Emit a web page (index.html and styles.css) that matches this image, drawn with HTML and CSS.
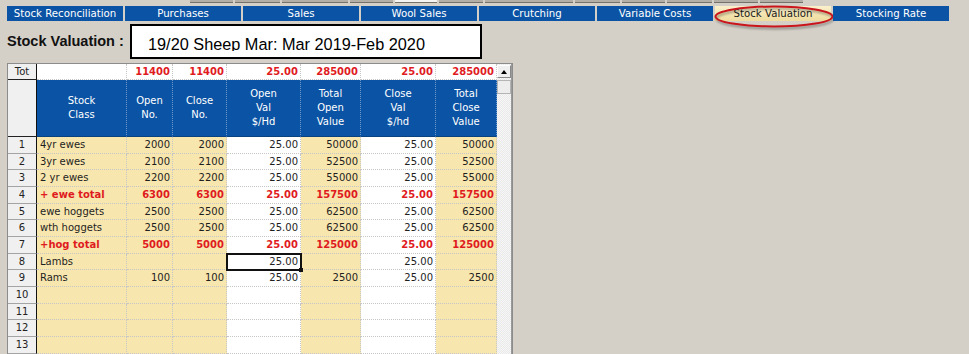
FILE: index.html
```html
<!DOCTYPE html>
<html lang="en">
<head>
  <meta charset="UTF-8">
  <meta name="viewport" content="width=device-width, initial-scale=1.0">
  <title>Stock Valuation</title>
  <link rel="stylesheet" href="styles.css">
</head>
<body>

  <!-- strip of buttons above the tabs -->
  <div class="strip">
    <span style="width:43px"></span><span style="width:45px"></span><span style="width:66px"></span>
    <span style="width:43px"></span><span class="lit" style="width:42px"></span><span style="width:44px"></span>
    <span style="width:88px"></span><span style="width:45px"></span><span style="width:43px"></span>
    <span style="width:45px"></span><span style="width:44px"></span><span style="width:43px"></span>
  </div>

  <!-- sheet tabs -->
  <div class="tabs">
    <div class="tab">Stock Reconciliation</div>
    <div class="tab">Purchases</div>
    <div class="tab">Sales</div>
    <div class="tab">Wool Sales</div>
    <div class="tab">Crutching</div>
    <div class="tab">Variable Costs</div>
    <div class="tab active">Stock Valuation
      <svg class="ring" viewBox="0 0 121 23"><ellipse cx="60" cy="11.5" rx="58.5" ry="10" fill="none" stroke="#c9151b" stroke-width="2"/></svg>
    </div>
    <div class="tab">Stocking Rate</div>
  </div>

  <div class="title-row">
    <div class="title-label">Stock Valuation :</div>
    <div class="title-box"><span class="title-text">19/20 Sheep Mar: Mar 2019-Feb 2020</span></div>
  </div>

  <div class="sheet">
    <div class="scroll">
      <div class="up"><i></i></div>
      <div class="thumb"></div>
    </div>

    <!-- Tot -->
    <div class="rh dark">Tot</div>
    <div class="c white"></div>
    <div class="c white red">11400</div>
    <div class="c white red">11400</div>
    <div class="c white red">25.00</div>
    <div class="c white red">285000</div>
    <div class="c white red">25.00</div>
    <div class="c white red">285000</div>

    <!-- header -->
    <div class="rh dark"></div>
    <div class="hd">Stock<br>Class</div>
    <div class="hd">Open<br>No.</div>
    <div class="hd">Close<br>No.</div>
    <div class="hd">Open<br>Val<br>$/Hd</div>
    <div class="hd">Total<br>Open<br>Value</div>
    <div class="hd">Close<br>Val<br>$/hd</div>
    <div class="hd">Total<br>Close<br>Value</div>

    <!-- 1 -->
    <div class="rh">1</div>
    <div class="c beige name">4yr ewes</div>
    <div class="c beige">2000</div>
    <div class="c beige">2000</div>
    <div class="c white">25.00</div>
    <div class="c beige">50000</div>
    <div class="c white">25.00</div>
    <div class="c beige">50000</div>

    <!-- 2 -->
    <div class="rh">2</div>
    <div class="c beige name">3yr ewes</div>
    <div class="c beige">2100</div>
    <div class="c beige">2100</div>
    <div class="c white">25.00</div>
    <div class="c beige">52500</div>
    <div class="c white">25.00</div>
    <div class="c beige">52500</div>

    <!-- 3 -->
    <div class="rh">3</div>
    <div class="c beige name">2 yr ewes</div>
    <div class="c beige">2200</div>
    <div class="c beige">2200</div>
    <div class="c white">25.00</div>
    <div class="c beige">55000</div>
    <div class="c white">25.00</div>
    <div class="c beige">55000</div>

    <!-- 4 -->
    <div class="rh">4</div>
    <div class="c beige name red">+ ewe total</div>
    <div class="c beige red">6300</div>
    <div class="c beige red">6300</div>
    <div class="c white red">25.00</div>
    <div class="c beige red">157500</div>
    <div class="c white red">25.00</div>
    <div class="c beige red">157500</div>

    <!-- 5 -->
    <div class="rh">5</div>
    <div class="c beige name">ewe hoggets</div>
    <div class="c beige">2500</div>
    <div class="c beige">2500</div>
    <div class="c white">25.00</div>
    <div class="c beige">62500</div>
    <div class="c white">25.00</div>
    <div class="c beige">62500</div>

    <!-- 6 -->
    <div class="rh">6</div>
    <div class="c beige name">wth hoggets</div>
    <div class="c beige">2500</div>
    <div class="c beige">2500</div>
    <div class="c white">25.00</div>
    <div class="c beige">62500</div>
    <div class="c white">25.00</div>
    <div class="c beige">62500</div>

    <!-- 7 -->
    <div class="rh">7</div>
    <div class="c beige name red">+hog total</div>
    <div class="c beige red">5000</div>
    <div class="c beige red">5000</div>
    <div class="c white red">25.00</div>
    <div class="c beige red">125000</div>
    <div class="c white red">25.00</div>
    <div class="c beige red">125000</div>

    <!-- 8 -->
    <div class="rh">8</div>
    <div class="c beige name">Lambs</div>
    <div class="c beige"></div>
    <div class="c beige"></div>
    <div class="c white sel">25.00</div>
    <div class="c beige"></div>
    <div class="c white">25.00</div>
    <div class="c beige"></div>

    <!-- 9 -->
    <div class="rh">9</div>
    <div class="c beige name">Rams</div>
    <div class="c beige">100</div>
    <div class="c beige">100</div>
    <div class="c white">25.00</div>
    <div class="c beige">2500</div>
    <div class="c white">25.00</div>
    <div class="c beige">2500</div>

    <!-- 10 - 13 -->
    <div class="rh">10</div>
    <div class="c beige"></div><div class="c beige"></div><div class="c beige"></div><div class="c white"></div>
    <div class="c beige"></div><div class="c white"></div><div class="c beige"></div>
    <div class="rh">11</div>
    <div class="c beige"></div><div class="c beige"></div><div class="c beige"></div><div class="c white"></div>
    <div class="c beige"></div><div class="c white"></div><div class="c beige"></div>
    <div class="rh">12</div>
    <div class="c beige"></div><div class="c beige"></div><div class="c beige"></div><div class="c white"></div>
    <div class="c beige"></div><div class="c white"></div><div class="c beige"></div>
    <div class="rh">13</div>
    <div class="c beige"></div><div class="c beige"></div><div class="c beige"></div><div class="c white"></div>
    <div class="c beige"></div><div class="c white"></div><div class="c beige"></div>
  </div>

</body>
</html>
```

FILE: styles.css
```css
* {
    box-sizing: border-box;
}

body {
    margin: 0;
    width: 969px;
    height: 354px;
    overflow: hidden;
    background-color: #d4d0c8;
    font-family: "DejaVu Sans", sans-serif;
    font-size: 10px;
    color: #1e1e1e;
}

/* Buttons strip */
.strip {
    display: flex;
    gap: 2px;
    height: 4px;
    padding-left: 190px;
}

.strip span {
    height: 3px;
    background-color: #b3afa7;
    border-bottom: 1px solid #75726c;
}

.strip .lit {
    background-color: #f4f4f2;
}

/* Tabs */
.tabs {
    display: flex;
    gap: 2px;
    margin-top: 2px;
    padding-left: 7px;
}

.tab {
    position: relative;
    width: 116px;
    height: 15px;
    line-height: 15px;
    background-color: #0b53a4;
    color: #fff;
    text-align: center;
    font-size: 10.2px;
    white-space: nowrap;
}

.tab.active {
    background: linear-gradient(#faf0cc, #eedb9d);
    color: #1a1a1a;
}

.ring {
    position: absolute;
    left: -1px;
    top: -1px;
    width: 121px;
    height: 23px;
    filter: drop-shadow(1px 2px 1px rgba(0, 0, 0, 0.35));
}

/* Title */
.title-row {
    display: flex;
    height: 35px;
    margin-top: 3px;
    padding-left: 7px;
}

.title-label {
    width: 123px;
    line-height: 35px;
    font-family: "Liberation Sans", Arial, sans-serif;
    font-size: 14.5px;
    font-weight: bold;
    color: #111;
}

.title-box {
    width: 352px;
    height: 35px;
    border: 2px solid #000;
    background-color: #fff;
    padding-left: 16px;
}

.title-text {
    display: block;
    height: 17px;
    margin-top: 8px;
    overflow: hidden;
    line-height: 20px;
    font-family: "Liberation Sans", Arial, sans-serif;
    font-size: 16.3px;
    color: #000;
}

/* Sheet grid */
.sheet {
    display: grid;
    width: fit-content;
    margin: 4px 0 0 7px;
    border: 1px solid #8c8c8c;
    border-bottom: none;
    grid-template-columns: 29px 90px 46px 54px 74px 60px 75px 61px 15px;
    grid-template-rows: 16px 57px repeat(13, 16.67px);
}

.rh {
    background-color: #f0f0f0;
    border-right: 1px solid #111;
    border-bottom: 1px solid #a4a4a4;
    text-align: center;
    line-height: 16px;
    color: #222;
}

.rh.dark {
    border-bottom-color: #222;
}

.c {
    border-right: 1px dotted #c6c6c6;
    border-bottom: 1px dotted #c6c6c6;
    padding: 0 2px 0 3px;
    line-height: 16px;
    text-align: right;
    white-space: nowrap;
    overflow: hidden;
}

.name {
    text-align: left;
}

.beige {
    background-color: #f8e6af;
}

.white {
    background-color: #fff;
}

.red {
    color: #df1b1e;
    font-weight: bold;
}

.hd {
    display: flex;
    align-items: center;
    justify-content: center;
    text-align: center;
    line-height: 14px;
    background-color: #0b53a4;
    color: #fff;
    border-right: 1px dotted #7099cc;
    border-bottom: 1px solid #08427f;
}

.sel {
    position: relative;
    z-index: 1;
    outline: 2px solid #111;
    outline-offset: -1px;
    overflow: visible;
}

.sel::after {
    content: "";
    position: absolute;
    right: -3px;
    bottom: -3px;
    width: 4px;
    height: 4px;
    background-color: #111;
}

/* Scroll bar */
.scroll {
    grid-column: 9;
    grid-row: 1 / -1;
    display: flex;
    flex-direction: column;
    border-right: 1px solid #9a9a9a;
    background: repeating-conic-gradient(#f7f7f7 0 25%, #e9e9e9 0 50%) 0 0 / 2px 2px;
}

.up {
    display: flex;
    align-items: center;
    justify-content: center;
    height: 13px;
    margin: 1px 0 0;
    border: 1px solid;
    border-color: #fff #8a8a8a #8a8a8a #fff;
    background-color: #f0f0f0;
}

.up i {
    width: 0;
    height: 0;
    border-left: 3.5px solid transparent;
    border-right: 3.5px solid transparent;
    border-bottom: 4px solid #000;
}

.thumb {
    height: 14px;
    margin-top: 2px;
    border: 1px solid #b4b4b4;
    background-color: #ededed;
}
```
